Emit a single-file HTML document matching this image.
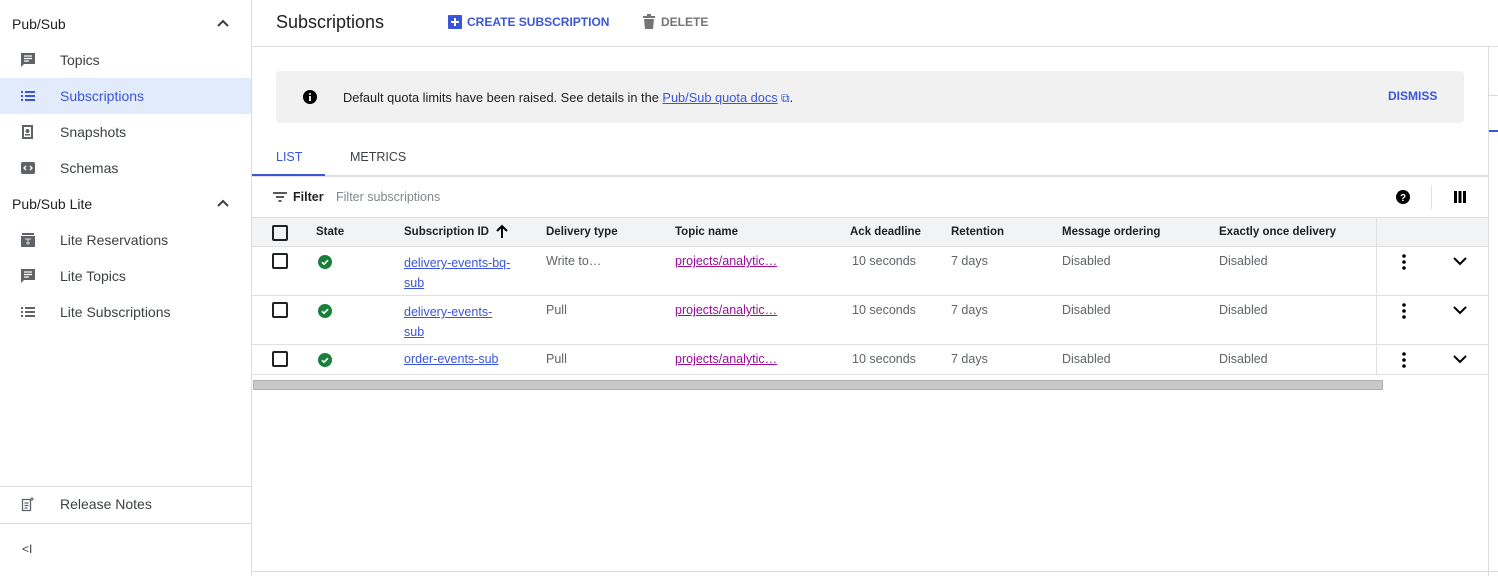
<!DOCTYPE html>
<html><head><style>
*{box-sizing:border-box;margin:0;padding:0}
body{width:1498px;height:576px;overflow:hidden;font-family:"Liberation Sans",Roboto,sans-serif;color:#202124;background:#fff;position:relative;font-size:13px}
.a{position:absolute;white-space:nowrap}
.side{position:absolute;left:0;top:0;width:252px;height:576px;border-right:1px solid #dadce0}
.nav{position:absolute;left:0;width:251px;height:36px;font-size:14px;color:#3c4043}
.nav span{position:absolute;left:60px;top:10px}
.nav svg{position:absolute;left:20px;top:10px}
.sec{position:absolute;left:12px;font-size:14px;color:#202124;font-weight:500}
.chev{position:absolute;left:216px}
.lnk{color:#3b55d9;text-decoration:underline;text-decoration-color:#3b55d9}
.pur{color:#9a0d9a;text-decoration:underline}
.gray{color:#5f6368}
.hdr{font-weight:bold;font-size:11.5px;color:#202124}
.cb{position:absolute;width:16px;height:16px;border:2px solid #202124;border-radius:2px}
.ok{position:absolute;width:14px;height:14px;border-radius:50%;background:#188038}
.cell{position:absolute;font-size:12.5px}
</style></head><body>
<div class="side">
  <div class="sec" style="top:16px">Pub/Sub</div>
  <svg class="chev" style="top:18px" width="14" height="10" viewBox="0 0 14 10"><path d="M2 8l5-5 5 5" stroke="#3c4043" stroke-width="2" fill="none"/></svg>
  <div class="nav" style="top:42px"><svg width="16" height="16" viewBox="0 0 16 16"><path d="M1 1h14v11H4l-3 3z" fill="#5f6368"/><path d="M4 4h8M4 6.5h8M4 9h5" stroke="#fff" stroke-width="1.2"/></svg><span>Topics</span></div>
  <div class="nav" style="top:78px;background:#e2ebfb;color:#3b55d9"><svg width="16" height="16" viewBox="0 0 16 16"><path d="M1 3h2v2H1zM5 3h10v2H5zM1 7h2v2H1zM5 7h10v2H5zM1 11h2v2H1zM5 11h10v2H5z" fill="#3b55d9"/></svg><span>Subscriptions</span></div>
  <div class="nav" style="top:114px"><svg width="16" height="16" viewBox="0 0 16 16"><rect x="2" y="1" width="11" height="14" fill="#5f6368"/><rect x="4" y="3" width="7" height="10" fill="#fff"/><circle cx="7.5" cy="7" r="2" fill="#5f6368"/><rect x="5" y="10" width="5" height="1.5" fill="#5f6368"/></svg><span>Snapshots</span></div>
  <div class="nav" style="top:150px"><svg width="16" height="16" viewBox="0 0 16 16"><rect x="1" y="2" width="14" height="12" rx="2" fill="#5f6368"/><path d="M6 6l-2 2 2 2M10 6l2 2-2 2" stroke="#fff" stroke-width="1.3" fill="none"/></svg><span>Schemas</span></div>
  <div class="sec" style="top:196px">Pub/Sub Lite</div>
  <svg class="chev" style="top:198px" width="14" height="10" viewBox="0 0 14 10"><path d="M2 8l5-5 5 5" stroke="#3c4043" stroke-width="2" fill="none"/></svg>
  <div class="nav" style="top:222px"><svg width="16" height="16" viewBox="0 0 16 16"><rect x="1" y="4" width="14" height="11" fill="#5f6368"/><rect x="2" y="1" width="12" height="2" fill="#5f6368"/><path d="M5 7h6M8 7v6M6 11h4" stroke="#ddd" stroke-width="1"/></svg><span>Lite Reservations</span></div>
  <div class="nav" style="top:258px"><svg width="16" height="16" viewBox="0 0 16 16"><path d="M1 1h14v11H4l-3 3z" fill="#5f6368"/><path d="M4 4h8M4 6.5h8M4 9h5" stroke="#fff" stroke-width="1.2"/></svg><span>Lite Topics</span></div>
  <div class="nav" style="top:294px"><svg width="16" height="16" viewBox="0 0 16 16"><path d="M1 3h2v2H1zM5 3h10v2H5zM1 7h2v2H1zM5 7h10v2H5zM1 11h2v2H1zM5 11h10v2H5z" fill="#5f6368"/></svg><span>Lite Subscriptions</span></div>
  <div class="a" style="left:0;top:486px;width:251px;border-top:1px solid #dadce0"></div>
  <div class="nav" style="top:486px"><svg width="16" height="16" viewBox="0 0 16 16"><path d="M2.5 3.5h8v11h-8z" stroke="#5f6368" stroke-width="1.3" fill="none"/><path d="M4.5 7h4M4.5 9.5h4M4.5 12h3" stroke="#5f6368" stroke-width="1.2"/><path d="M12 1v4M10 3h4" stroke="#5f6368" stroke-width="1"/></svg><span>Release Notes</span></div>
  <div class="a" style="left:0;top:523px;width:251px;border-top:1px solid #dadce0"></div>
  <div class="a" style="left:22px;top:542px;font-size:12px;color:#3c4043">&lt;I</div>
</div>
<div class="a" style="left:276px;top:12px;font-size:18px;color:#202124">Subscriptions</div>
<svg class="a" style="left:448px;top:15px" width="14" height="14" viewBox="0 0 14 14"><rect width="14" height="14" rx="1" fill="#3b55d9"/><path d="M7 3v8M3 7h8" stroke="#fff" stroke-width="2"/></svg>
<div class="a" style="left:467px;top:15px;font-size:12px;font-weight:bold;color:#3b55d9">CREATE SUBSCRIPTION</div>
<svg class="a" style="left:642px;top:14px" width="14" height="15" viewBox="0 0 14 15"><path d="M1 2h12v2H1zM5 0h4v2H5z" fill="#757575"/><path d="M2 5h10l-1 10H3z" fill="#757575"/></svg>
<div class="a" style="left:661px;top:15px;font-size:12px;font-weight:bold;color:#757575">DELETE</div>
<div class="a" style="left:252px;top:46px;width:1246px;border-top:1px solid #dadce0"></div>
<div class="a" style="left:1488px;top:46px;height:530px;border-left:1px solid #dadce0"></div>
<div class="a" style="left:1489px;top:95px;width:9px;border-top:1px solid #dadce0"></div>
<div class="a" style="left:1489px;top:130px;width:9px;border-top:2px solid #3b55d9"></div>
<div class="a" style="left:276px;top:71px;width:1188px;height:52px;background:#f1f1f1;border-radius:4px"></div>
<svg class="a" style="left:303px;top:90px" width="14" height="14" viewBox="0 0 14 14"><circle cx="7" cy="7" r="7" fill="#000"/><rect x="6.1" y="6" width="1.8" height="5" fill="#fff"/><circle cx="7" cy="4" r="1" fill="#fff"/></svg>
<div class="a" style="left:343px;top:90px;font-size:12.8px">Default quota limits have been raised. See details in the <span class="lnk">Pub/Sub quota docs</span><span style="color:#3b55d9;font-size:12px"> ⧉</span>.</div>
<div class="a" style="left:1388px;top:89px;font-size:12px;font-weight:bold;color:#3b55d9">DISMISS</div>
<div class="a" style="left:276px;top:150px;font-size:12.5px;font-weight:500;color:#3b55d9">LIST</div>
<div class="a" style="left:350px;top:150px;font-size:12.5px;color:#3c4043">METRICS</div>
<div class="a" style="left:252px;top:175px;width:1236px;border-top:2px solid #e0e0e0"></div>
<div class="a" style="left:252px;top:174px;width:73px;border-top:2px solid #3b55d9"></div>
<svg class="a" style="left:273px;top:192px" width="14" height="10" viewBox="0 0 14 10"><path d="M0 1h14M3 5h8M5.5 9h3" stroke="#202124" stroke-width="1.6"/></svg>
<div class="a" style="left:293px;top:190px;font-weight:bold;font-size:12.5px">Filter</div>
<div class="a" style="left:336px;top:190px;font-size:12.5px;color:#80868b">Filter subscriptions</div>
<svg class="a" style="left:1396px;top:190px" width="14" height="14" viewBox="0 0 14 14"><circle cx="7" cy="7" r="7" fill="#000"/><text x="7" y="11" font-size="10" font-weight="bold" fill="#fff" text-anchor="middle" font-family="Liberation Sans">?</text></svg>
<div class="a" style="left:1431px;top:185px;height:24px;border-left:1px solid #e0e0e0"></div>
<svg class="a" style="left:1454px;top:191px" width="12" height="12" viewBox="0 0 12 12"><path d="M0 0h3v12H0zM4.5 0h3v12h-3zM9 0h3v12H9z" fill="#000"/></svg>
<div class="a" style="left:252px;top:217px;width:1236px;height:30px;background:#f1f3f4;border-top:1px solid #e0e0e0;border-bottom:1px solid #e0e0e0"></div>
<div class="a" style="left:1376px;top:217px;height:158px;border-left:1px solid #e0e0e0"></div>
<div class="cb" style="left:272px;top:225px"></div>
<div class="a hdr" style="left:316px;top:226px">State</div>
<div class="a hdr" style="left:404px;top:226px">Subscription ID</div>
<svg class="a" style="left:495px;top:224px" width="14" height="15" viewBox="0 0 14 15"><path d="M7 14V2M2 7l5-5 5 5" stroke="#000" stroke-width="2" fill="none"/></svg>
<div class="a hdr" style="left:546px;top:226px">Delivery type</div>
<div class="a hdr" style="left:675px;top:226px">Topic name</div>
<div class="a hdr" style="left:850px;top:226px">Ack deadline</div>
<div class="a hdr" style="left:951px;top:226px">Retention</div>
<div class="a hdr" style="left:1062px;top:226px">Message ordering</div>
<div class="a hdr" style="left:1219px;top:226px">Exactly once delivery</div>
<div class="a" style="left:252px;top:295px;width:1236px;border-top:1px solid #e0e0e0"></div>
<div class="a" style="left:252px;top:344px;width:1236px;border-top:1px solid #e0e0e0"></div>
<div class="a" style="left:252px;top:374px;width:1236px;border-top:1px solid #e0e0e0"></div>

<div class="cb" style="left:272px;top:253px"></div><div class="ok" style="left:318px;top:255px"></div>
<svg class="a" style="left:318px;top:255px" width="14" height="14"><path d="M4 7.2l2 2 4-4" stroke="#fff" stroke-width="1.6" fill="none"/></svg>
<div class="cell" style="left:404px;top:253px;line-height:20px"><span class="lnk">delivery-events-bq-</span><br><span class="lnk">sub</span></div>
<div class="cell gray" style="left:546px;top:254px">Write to…</div>
<div class="cell pur" style="left:675px;top:254px">projects/analytic… </div>
<div class="cell gray" style="left:852px;top:254px">10 seconds</div>
<div class="cell gray" style="left:951px;top:254px">7 days</div>
<div class="cell gray" style="left:1062px;top:254px">Disabled</div>
<div class="cell gray" style="left:1219px;top:254px">Disabled</div>

<div class="cb" style="left:272px;top:302px"></div><div class="ok" style="left:318px;top:304px"></div>
<svg class="a" style="left:318px;top:304px" width="14" height="14"><path d="M4 7.2l2 2 4-4" stroke="#fff" stroke-width="1.6" fill="none"/></svg>
<div class="cell" style="left:404px;top:302px;line-height:20px"><span class="lnk">delivery-events-</span><br><span class="lnk">sub</span></div>
<div class="cell gray" style="left:546px;top:303px">Pull</div>
<div class="cell pur" style="left:675px;top:303px">projects/analytic… </div>
<div class="cell gray" style="left:852px;top:303px">10 seconds</div>
<div class="cell gray" style="left:951px;top:303px">7 days</div>
<div class="cell gray" style="left:1062px;top:303px">Disabled</div>
<div class="cell gray" style="left:1219px;top:303px">Disabled</div>

<div class="cb" style="left:272px;top:351px"></div><div class="ok" style="left:318px;top:353px"></div>
<svg class="a" style="left:318px;top:353px" width="14" height="14"><path d="M4 7.2l2 2 4-4" stroke="#fff" stroke-width="1.6" fill="none"/></svg>
<div class="cell" style="left:404px;top:352px"><span class="lnk">order-events-sub</span></div>
<div class="cell gray" style="left:546px;top:352px">Pull</div>
<div class="cell pur" style="left:675px;top:352px">projects/analytic… </div>
<div class="cell gray" style="left:852px;top:352px">10 seconds</div>
<div class="cell gray" style="left:951px;top:352px">7 days</div>
<div class="cell gray" style="left:1062px;top:352px">Disabled</div>
<div class="cell gray" style="left:1219px;top:352px">Disabled</div>

<svg class="a" style="left:1401px;top:253px" width="6" height="18"><circle cx="3" cy="3" r="1.8"/><circle cx="3" cy="9" r="1.8"/><circle cx="3" cy="15" r="1.8"/></svg>
<svg class="a" style="left:1453px;top:256px" width="14" height="10"><path d="M1 2l6 6 6-6" stroke="#000" stroke-width="2" fill="none"/></svg>
<svg class="a" style="left:1401px;top:302px" width="6" height="18"><circle cx="3" cy="3" r="1.8"/><circle cx="3" cy="9" r="1.8"/><circle cx="3" cy="15" r="1.8"/></svg>
<svg class="a" style="left:1453px;top:305px" width="14" height="10"><path d="M1 2l6 6 6-6" stroke="#000" stroke-width="2" fill="none"/></svg>
<svg class="a" style="left:1401px;top:351px" width="6" height="18"><circle cx="3" cy="3" r="1.8"/><circle cx="3" cy="9" r="1.8"/><circle cx="3" cy="15" r="1.8"/></svg>
<svg class="a" style="left:1453px;top:354px" width="14" height="10"><path d="M1 2l6 6 6-6" stroke="#000" stroke-width="2" fill="none"/></svg>

<div class="a" style="left:253px;top:380px;width:1130px;height:10px;background:#c9c9c9;border:1px solid #b0b0b0"></div>
<div class="a" style="left:252px;top:571px;width:1246px;border-top:1px solid #dadce0"></div>
</body></html>
